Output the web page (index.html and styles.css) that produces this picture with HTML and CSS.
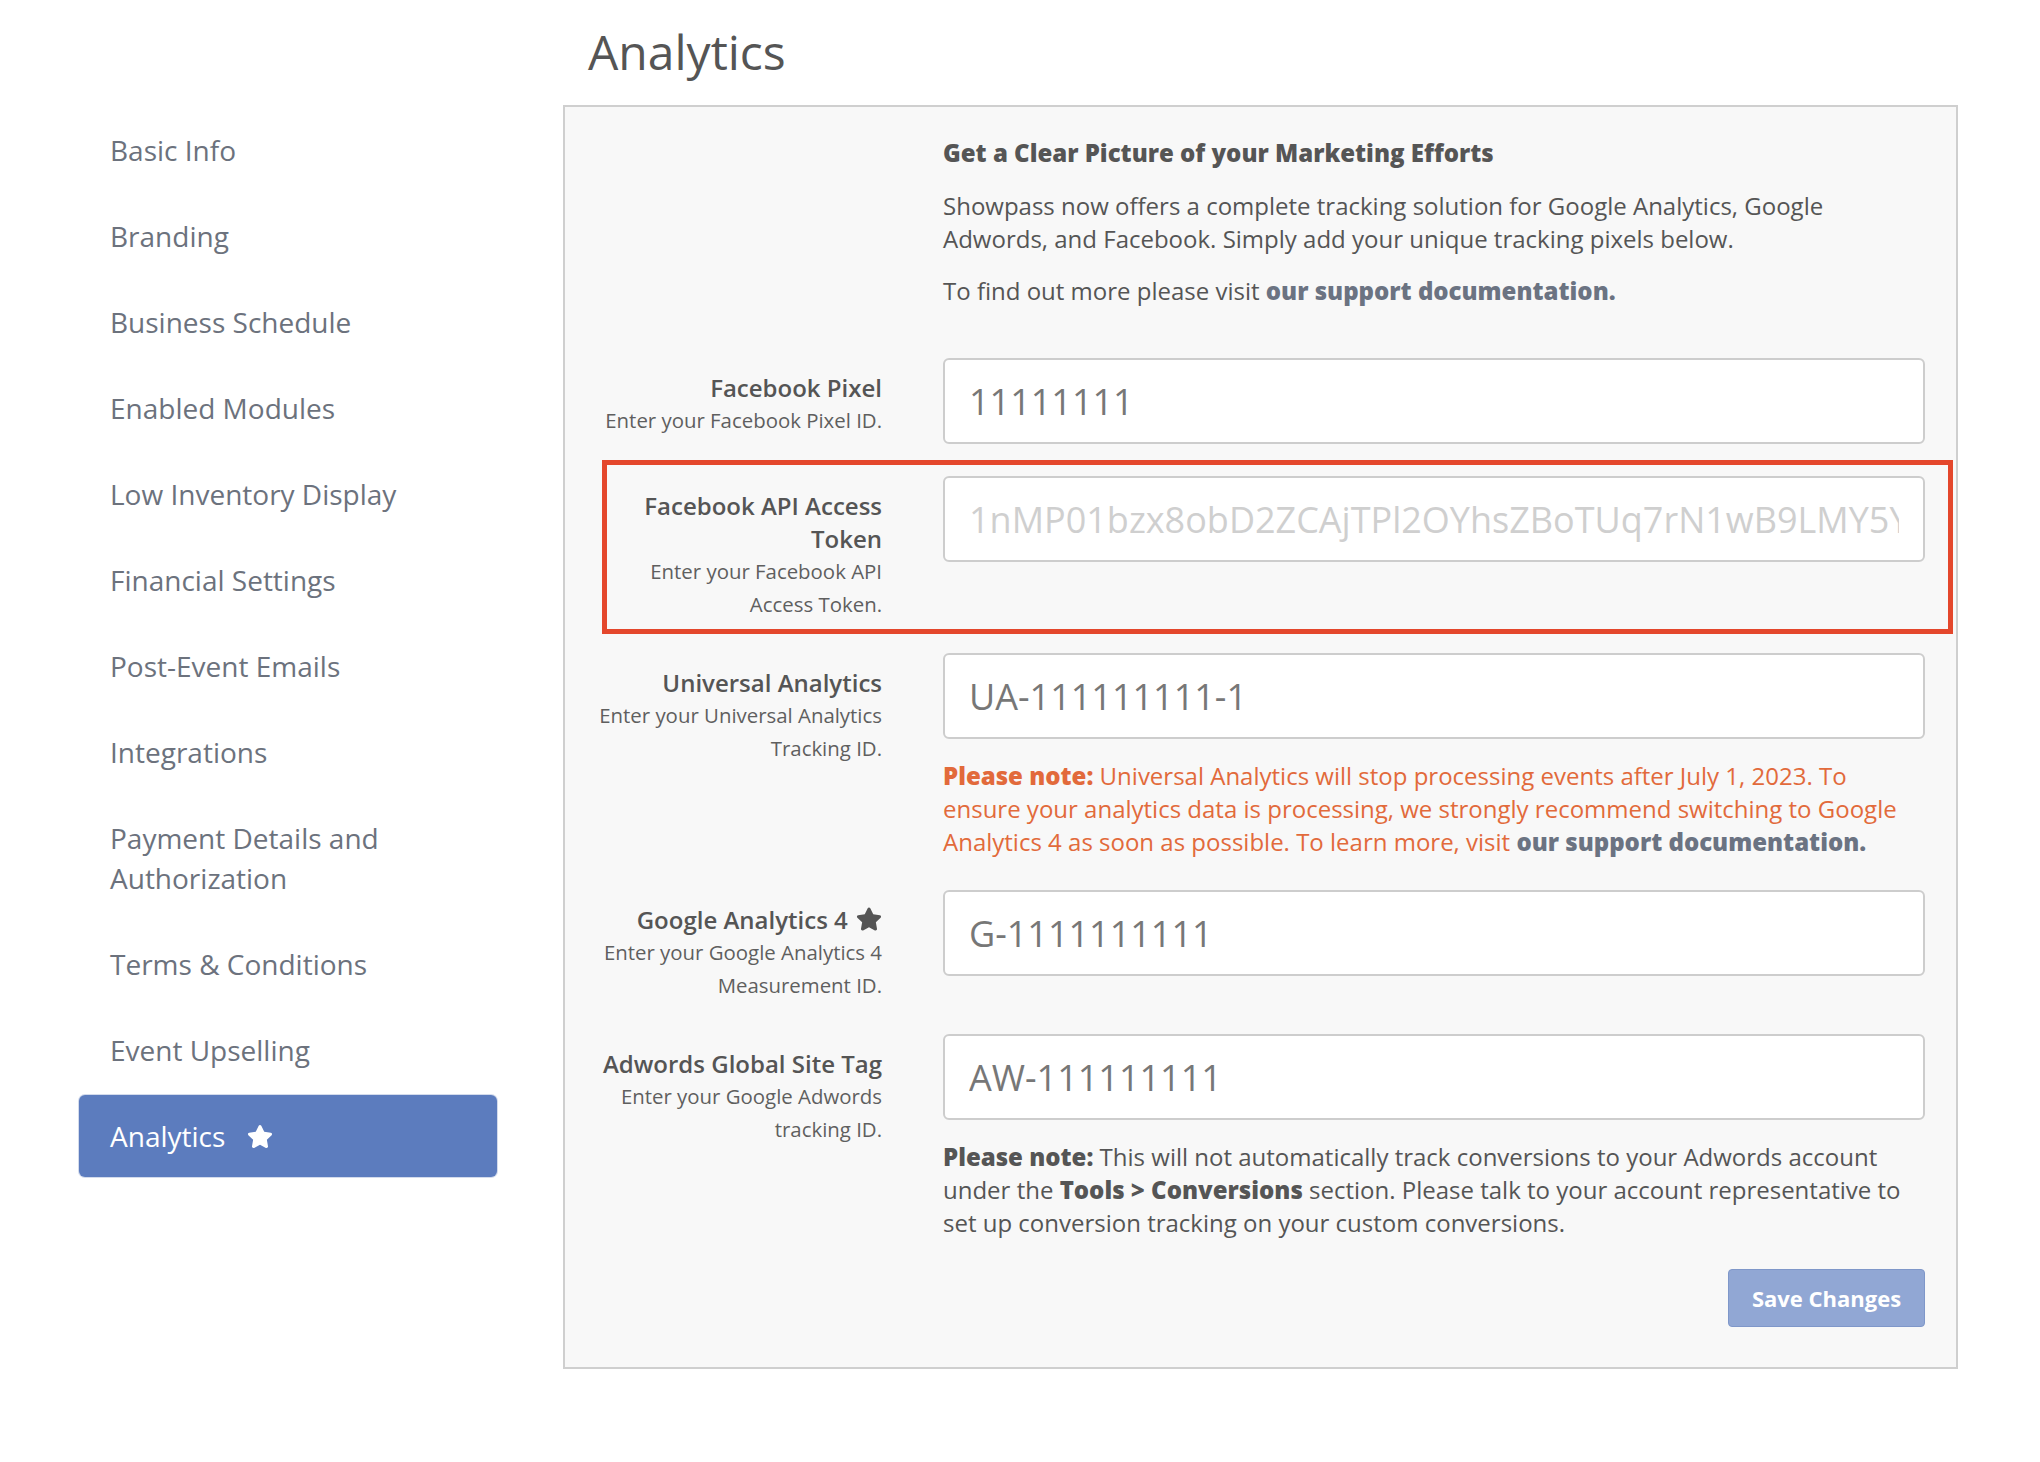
FILE: index.html
```html
<!DOCTYPE html>
<html lang="en">
<head>
    <meta charset="UTF-8">
    <meta name="viewport" content="width=device-width, initial-scale=1.0">
    <title>Analytics</title>
    <link rel="stylesheet" href="styles.css">
</head>
<body>
    <div class="page">
        <aside class="side-nav">
            <ul class="side-menu">
                <li><a href="#">Basic Info</a></li>
                <li><a href="#">Branding</a></li>
                <li><a href="#">Business Schedule</a></li>
                <li><a href="#">Enabled Modules</a></li>
                <li><a href="#">Low Inventory Display</a></li>
                <li><a href="#">Financial Settings</a></li>
                <li><a href="#">Post-Event Emails</a></li>
                <li><a href="#">Integrations</a></li>
                <li><a href="#">Payment Details and Authorization</a></li>
                <li><a href="#">Terms &amp; Conditions</a></li>
                <li><a href="#">Event Upselling</a></li>
                <li class="active">
                    <a href="#">Analytics
                        <svg class="star side-star" viewBox="0 0 576 512"><path d="M259.3 17.8L194 150.2 47.9 171.5c-26.2 3.8-36.7 36.1-17.7 54.6l105.7 103-25 145.5c-4.5 26.3 23.2 46 46.4 33.7L288 439.6l130.7 68.7c23.2 12.2 50.9-7.4 46.4-33.7l-25-145.5 105.7-103c19-18.5 8.5-50.8-17.7-54.6L382 150.2 316.7 17.8c-11.7-23.6-45.6-23.9-57.4 0z"/></svg>
                    </a>
                </li>
            </ul>
        </aside>

        <main class="main-content">
            <h1 class="page-title">Analytics</h1>

            <form class="panel">
                <div class="intro">
                    <h3>Get a Clear Picture of your Marketing Efforts</h3>
                    <p>Showpass now offers a complete tracking solution for Google Analytics, Google Adwords, and Facebook. Simply add your unique tracking pixels below.</p>
                    <p>To find out more please visit <a href="#" class="doc-link">our support documentation.</a></p>
                </div>

                <div class="form-row">
                    <div class="field-label">
                        <label for="fb-pixel">Facebook Pixel</label>
                        <p class="help">Enter your Facebook Pixel ID.</p>
                    </div>
                    <div class="field-input">
                        <input id="fb-pixel" type="text" value="11111111">
                    </div>
                </div>

                <div class="form-row highlight">
                    <div class="field-label">
                        <label for="fb-token">Facebook API Access Token</label>
                        <p class="help">Enter your Facebook API Access Token.</p>
                    </div>
                    <div class="field-input">
                        <input id="fb-token" type="text" placeholder="1nMP01bzx8obD2ZCAjTPl2OYhsZBoTUq7rN1wB9LMY5YkZCq2WxT">
                    </div>
                </div>

                <div class="form-row">
                    <div class="field-label">
                        <label for="ua-id">Universal Analytics</label>
                        <p class="help">Enter your Universal Analytics Tracking ID.</p>
                    </div>
                    <div class="field-input">
                        <input id="ua-id" type="text" value="UA-111111111-1">
                        <p class="note warning"><strong>Please note:</strong> Universal Analytics will stop processing events after July 1, 2023. To ensure your analytics data is processing, we strongly recommend switching to Google Analytics 4 as soon as possible. To learn more, visit <a href="#" class="doc-link">our support documentation.</a></p>
                    </div>
                </div>

                <div class="form-row">
                    <div class="field-label">
                        <label for="ga4-id">Google Analytics 4
                            <svg class="star label-star" viewBox="0 0 576 512"><path d="M259.3 17.8L194 150.2 47.9 171.5c-26.2 3.8-36.7 36.1-17.7 54.6l105.7 103-25 145.5c-4.5 26.3 23.2 46 46.4 33.7L288 439.6l130.7 68.7c23.2 12.2 50.9-7.4 46.4-33.7l-25-145.5 105.7-103c19-18.5 8.5-50.8-17.7-54.6L382 150.2 316.7 17.8c-11.7-23.6-45.6-23.9-57.4 0z"/></svg>
                        </label>
                        <p class="help">Enter your Google Analytics 4 Measurement ID.</p>
                    </div>
                    <div class="field-input">
                        <input id="ga4-id" type="text" value="G-1111111111">
                    </div>
                </div>

                <div class="form-row last">
                    <div class="field-label">
                        <label for="aw-id">Adwords Global Site Tag</label>
                        <p class="help">Enter your Google Adwords tracking ID.</p>
                    </div>
                    <div class="field-input">
                        <input id="aw-id" type="text" value="AW-111111111">
                        <p class="note"><strong>Please note:</strong> This will not automatically track conversions to your Adwords account under the <strong>Tools &gt; Conversions</strong> section. Please talk to your account representative to set up conversion tracking on your custom conversions.</p>
                    </div>
                </div>

                <div class="form-actions">
                    <button type="button" class="btn-save">Save Changes</button>
                </div>
            </form>
        </main>
    </div>
</body>
</html>
```

FILE: styles.css
```css
* {
    margin: 0;
    padding: 0;
    box-sizing: border-box;
}

body {
    font-family: 'Open Sans', 'Noto Sans', sans-serif;
    background: #fff;
    color: #555;
}

.page {
    display: flex;
    align-items: flex-start;
    padding-left: 79px;
}

/* Menu de gauche */
.side-nav {
    width: 418px;
    padding-top: 109px;
}

.side-menu {
    list-style: none;
}

.side-menu li {
    margin-bottom: 4px;
}

.side-menu a {
    display: block;
    padding: 21px 31px;
    font-size: 28px;
    line-height: 40px;
    color: #6c727d;
    text-decoration: none;
    border-radius: 6px;
}

.side-menu li.active a {
    background-color: #5c7cbe;
    color: #fff;
    box-shadow: 0 0 0 1px #d3dbec;
}

.star {
    display: inline-block;
    fill: currentColor;
}

.side-star {
    width: 26px;
    height: 25px;
    margin-left: 14px;
    vertical-align: -2px;
}

/* Contenu principal */
.main-content {
    margin-left: 66px;
    width: 1395px;
}

.page-title {
    padding: 22px 0 0 25px;
    margin-bottom: 23px;
    font-size: 48px;
    line-height: 60px;
    font-weight: 400;
    color: #555;
}

.panel {
    background: #f8f8f8;
    border: 2px solid #cfcfcf;
    padding: 29px 31px 40px 25px;
}

.intro {
    margin-left: 353px;
    margin-bottom: 51px;
    font-size: 24px;
    line-height: 33px;
}

.intro h3 {
    font-size: 24px;
    font-weight: 800;
    margin-bottom: 20px;
}

.intro p {
    margin-bottom: 19px;
}

.intro p:last-child {
    margin-bottom: 0;
}

strong {
    font-weight: 800;
}

.doc-link {
    color: #6b7382;
    font-weight: 800;
    text-decoration: none;
}

.form-row {
    display: grid;
    grid-template-columns: 292px 1fr;
    column-gap: 61px;
    margin-bottom: 32px;
}

.form-row.last {
    margin-bottom: 30px;
}

.form-row.highlight {
    position: relative;
}

/* cadre rouge d'annotation */
.form-row.highlight::after {
    content: "";
    position: absolute;
    top: -16px;
    bottom: -13px;
    left: 12px;
    right: -28px;
    border: 5px solid #e4472c;
    pointer-events: none;
}

.field-label {
    padding-top: 13px;
    text-align: right;
}

.field-label label {
    display: block;
    font-size: 24px;
    line-height: 33px;
    font-weight: 600;
    color: #555;
}

.label-star {
    width: 26px;
    height: 24px;
    margin-left: 2px;
    vertical-align: -2px;
    color: #555;
}

.help {
    font-size: 20.4px;
    line-height: 33px;
    color: #5f5f5f;
}

.field-input input {
    display: block;
    width: 100%;
    height: 86px;
    padding: 0 24px;
    background: #fff;
    border: 2px solid #cdcdcd;
    border-radius: 6px;
    font-family: 'Open Sans', 'Noto Sans', sans-serif;
    font-size: 36px;
    color: #777;
    outline: none;
}

.field-input input::placeholder {
    color: #cfcfcf;
}

.note {
    margin-top: 20px;
    font-size: 24px;
    line-height: 33px;
    color: #555;
}

.note.warning {
    color: #e26a3b;
}

.form-actions {
    display: flex;
    justify-content: flex-end;
}

.btn-save {
    width: 197px;
    height: 58px;
    background-color: #91a7d4;
    border: 1px solid #7f97c9;
    border-radius: 4px;
    color: #fff;
    font-family: 'Open Sans', 'Noto Sans', sans-serif;
    font-size: 22px;
    font-weight: 700;
}
```
